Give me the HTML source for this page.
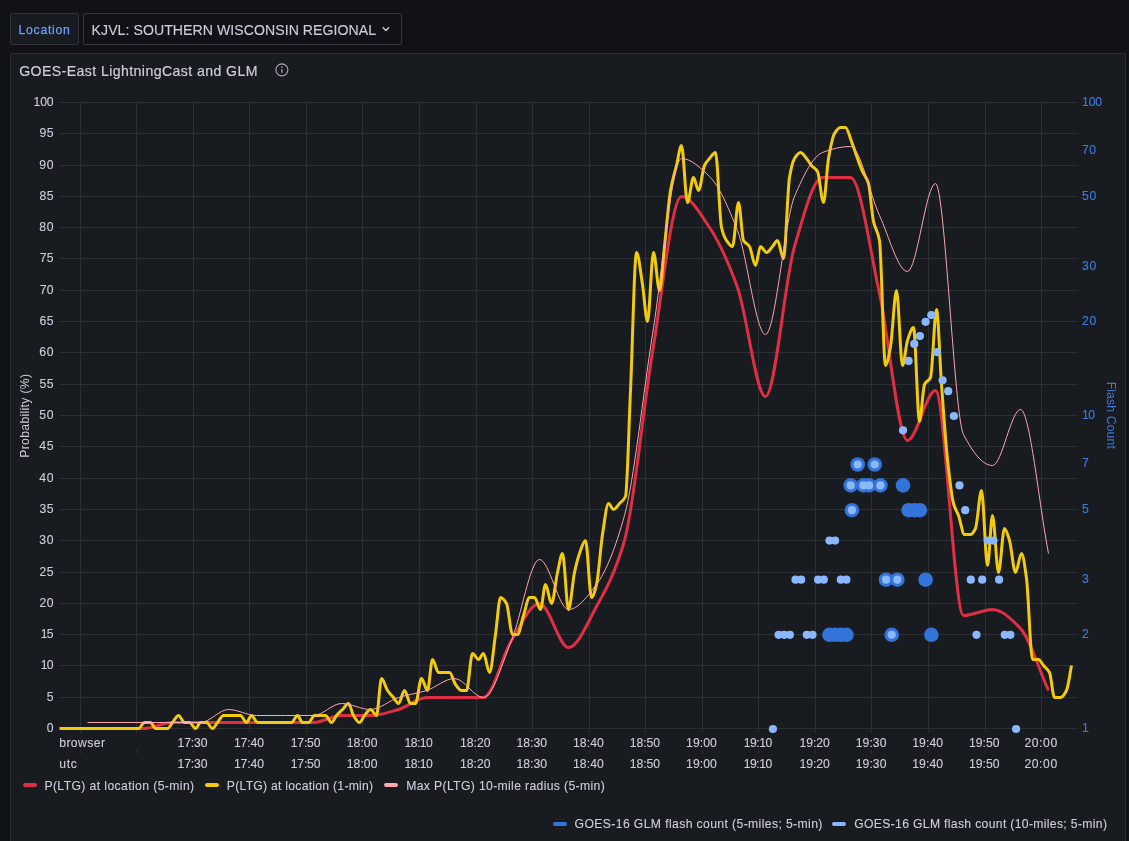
<!DOCTYPE html>
<html><head><meta charset="utf-8"><title>GOES-East LightningCast and GLM</title>
<style>
html,body{margin:0;padding:0;}
html{width:1129px;height:841px;overflow:hidden;background:#111217;}
body{width:1129px;height:841px;overflow:hidden;background:#111217;font-family:"Liberation Sans",sans-serif;color:#ccccdc;position:relative;}
.loc{position:absolute;left:10px;top:13px;width:67px;height:30px;border:1px solid #30333a;background:#181b1f;border-radius:2px;}
.sel{position:absolute;left:83px;top:13px;width:317px;height:30px;border:1px solid #34373d;background:#111217;border-radius:2px;}
.panel{position:absolute;left:10px;top:53px;width:1114px;height:787px;border:1px solid #2a2d32;border-bottom:none;background:#181b1f;border-radius:2px 2px 0 0;}
.t{position:absolute;line-height:20px;height:20px;white-space:nowrap;-webkit-text-stroke:0.12px #ccccdc;}
.yl{position:absolute;left:13px;width:40.5px;text-align:right;font-size:12.2px;line-height:16px;height:16px;-webkit-text-stroke:0.12px #ccccdc;}
.yr{position:absolute;left:1082px;font-size:12.2px;line-height:16px;height:16px;color:#3d79dd;-webkit-text-stroke:0.15px #3d79dd;}
.xl{position:absolute;width:60px;text-align:center;font-size:12.2px;white-space:nowrap;line-height:16px;height:16px;-webkit-text-stroke:0.12px #ccccdc;}
.mk{position:absolute;width:14px;height:4px;border-radius:2px;}
svg{position:absolute;left:0;top:0;}
svg .g rect{fill:#2c2f34;}
#wrap{position:absolute;left:0;top:0;width:1129px;height:841px;will-change:transform;}
</style></head><body>
<div class="loc"></div>
<div class="sel"></div>
<div class="panel"></div>
<div id="wrap">
<svg width="1129" height="841" viewBox="0 0 1129 841">
<path d="M383.1 27.7l2.8 2.8 2.8-2.8" fill="none" stroke="#ccccdc" stroke-width="1.4" stroke-linecap="round" stroke-linejoin="round"/>
<g fill="none" stroke="#a9a9b7" stroke-width="1.15"><circle cx="281.9" cy="69.8" r="6"/><path d="M281.9 69.2v3.5M281.9 66.6v1.4" stroke-width="1.3" stroke-linecap="butt"/></g>
<g class="g">
<rect x="60" y="728" width="1018" height="1"/>
<rect x="60" y="697" width="1018" height="1"/>
<rect x="60" y="665" width="1018" height="1"/>
<rect x="60" y="634" width="1018" height="1"/>
<rect x="60" y="603" width="1018" height="1"/>
<rect x="60" y="572" width="1018" height="1"/>
<rect x="60" y="540" width="1018" height="1"/>
<rect x="60" y="509" width="1018" height="1"/>
<rect x="60" y="478" width="1018" height="1"/>
<rect x="60" y="446" width="1018" height="1"/>
<rect x="60" y="415" width="1018" height="1"/>
<rect x="60" y="384" width="1018" height="1"/>
<rect x="60" y="352" width="1018" height="1"/>
<rect x="60" y="321" width="1018" height="1"/>
<rect x="60" y="290" width="1018" height="1"/>
<rect x="60" y="258" width="1018" height="1"/>
<rect x="60" y="227" width="1018" height="1"/>
<rect x="60" y="196" width="1018" height="1"/>
<rect x="60" y="165" width="1018" height="1"/>
<rect x="60" y="133" width="1018" height="1"/>
<rect x="60" y="102" width="1018" height="1"/>
<rect x="80" y="102" width="1" height="630.5"/>
<rect x="80" y="750" width="1" height="3.5"/>
<rect x="136" y="102" width="1" height="630.5"/>
<rect x="136" y="750" width="1" height="3.5"/>
<rect x="193" y="102" width="1" height="630.5"/>
<rect x="193" y="750" width="1" height="3.5"/>
<rect x="249" y="102" width="1" height="630.5"/>
<rect x="249" y="750" width="1" height="3.5"/>
<rect x="306" y="102" width="1" height="630.5"/>
<rect x="306" y="750" width="1" height="3.5"/>
<rect x="362" y="102" width="1" height="630.5"/>
<rect x="362" y="750" width="1" height="3.5"/>
<rect x="419" y="102" width="1" height="630.5"/>
<rect x="419" y="750" width="1" height="3.5"/>
<rect x="476" y="102" width="1" height="630.5"/>
<rect x="476" y="750" width="1" height="3.5"/>
<rect x="532" y="102" width="1" height="630.5"/>
<rect x="532" y="750" width="1" height="3.5"/>
<rect x="589" y="102" width="1" height="630.5"/>
<rect x="589" y="750" width="1" height="3.5"/>
<rect x="645" y="102" width="1" height="630.5"/>
<rect x="645" y="750" width="1" height="3.5"/>
<rect x="702" y="102" width="1" height="630.5"/>
<rect x="702" y="750" width="1" height="3.5"/>
<rect x="758" y="102" width="1" height="630.5"/>
<rect x="758" y="750" width="1" height="3.5"/>
<rect x="815" y="102" width="1" height="630.5"/>
<rect x="815" y="750" width="1" height="3.5"/>
<rect x="871" y="102" width="1" height="630.5"/>
<rect x="871" y="750" width="1" height="3.5"/>
<rect x="928" y="102" width="1" height="630.5"/>
<rect x="928" y="750" width="1" height="3.5"/>
<rect x="985" y="102" width="1" height="630.5"/>
<rect x="985" y="750" width="1" height="3.5"/>
<rect x="1041" y="102" width="1" height="630.5"/>
<rect x="1041" y="750" width="1" height="3.5"/>
</g>
<g fill="none" stroke-linejoin="round" stroke-linecap="butt">
<path d="M87.50 728.50C96.83 728.50 106.17 728.50 115.50 728.50C124.83 728.50 134.17 728.50 143.50 728.50C153.17 728.50 162.83 722.50 172.50 722.50C181.83 722.50 191.17 722.50 200.50 722.50C209.83 722.50 219.17 722.50 228.50 722.50C237.83 722.50 247.17 722.50 256.50 722.50C266.17 722.50 275.83 722.50 285.50 722.50C294.83 722.50 304.17 722.50 313.50 722.50C322.83 722.50 332.17 715.50 341.50 715.50C351.17 715.50 360.83 715.50 370.50 715.50C379.83 715.50 389.17 712.17 398.50 709.50C407.83 706.83 417.17 697.50 426.50 697.50C435.83 697.50 445.17 697.50 454.50 697.50C464.17 697.50 473.83 697.50 483.50 697.50C492.83 697.50 502.17 655.46 511.50 640.50C520.83 625.54 530.17 603.50 539.50 603.50C549.17 603.50 558.83 647.50 568.50 647.50C577.83 647.50 587.17 623.36 596.50 606.50C605.83 589.64 615.17 573.07 624.50 540.50C633.83 507.93 643.17 408.29 652.50 352.50C662.17 294.72 671.83 196.50 681.50 196.50C690.83 196.50 700.17 213.87 709.50 227.50C718.83 241.13 728.17 261.70 737.50 287.50C746.83 313.30 756.17 396.50 765.50 396.50C775.17 396.50 784.83 278.70 794.50 246.50C803.83 215.41 813.17 177.50 822.50 177.50C831.83 177.50 841.17 177.50 850.50 177.50C860.17 177.50 869.83 249.57 879.50 293.50C888.83 335.91 898.17 440.50 907.50 440.50C916.83 440.50 926.17 390.50 935.50 390.50C944.83 390.50 954.17 615.50 963.50 615.50C973.17 615.50 982.83 609.50 992.50 609.50C1001.83 609.50 1011.17 618.80 1020.50 628.50C1029.83 638.20 1039.17 669.83 1048.50 690.50" stroke="#E02F44" stroke-width="3"/>
<path d="M59.50 728.50C61.50 728.50 63.50 728.50 65.50 728.50C67.17 728.50 68.83 728.50 70.50 728.50C72.50 728.50 74.50 728.50 76.50 728.50C78.50 728.50 80.50 728.50 82.50 728.50C84.17 728.50 85.83 728.50 87.50 728.50C89.50 728.50 91.50 728.50 93.50 728.50C95.50 728.50 97.50 728.50 99.50 728.50C101.17 728.50 102.83 728.50 104.50 728.50C106.50 728.50 108.50 728.50 110.50 728.50C112.50 728.50 114.50 728.50 116.50 728.50C118.17 728.50 119.83 728.50 121.50 728.50C123.50 728.50 125.50 728.50 127.50 728.50C129.50 728.50 131.50 728.50 133.50 728.50C135.17 728.50 136.83 728.50 138.50 728.50C140.50 728.50 142.50 722.50 144.50 722.50C146.50 722.50 148.50 722.50 150.50 722.50C152.17 722.50 153.83 728.50 155.50 728.50C157.50 728.50 159.50 728.50 161.50 728.50C163.50 728.50 165.50 728.50 167.50 728.50C169.17 728.50 170.83 724.47 172.50 722.50C174.50 720.13 176.50 715.50 178.50 715.50C180.50 715.50 182.50 722.50 184.50 722.50C186.17 722.50 187.83 722.50 189.50 722.50C191.50 722.50 193.50 728.50 195.50 728.50C197.17 728.50 198.83 722.50 200.50 722.50C202.50 722.50 204.50 722.50 206.50 722.50C208.50 722.50 210.50 728.50 212.50 728.50C214.17 728.50 215.83 724.47 217.50 722.50C219.50 720.13 221.50 715.50 223.50 715.50C225.50 715.50 227.50 715.50 229.50 715.50C231.17 715.50 232.83 715.50 234.50 715.50C236.50 715.50 238.50 715.50 240.50 715.50C242.50 715.50 244.50 722.50 246.50 722.50C248.17 722.50 249.83 715.50 251.50 715.50C253.50 715.50 255.50 722.50 257.50 722.50C259.50 722.50 261.50 722.50 263.50 722.50C265.17 722.50 266.83 722.50 268.50 722.50C270.50 722.50 272.50 722.50 274.50 722.50C276.50 722.50 278.50 722.50 280.50 722.50C282.17 722.50 283.83 722.50 285.50 722.50C287.50 722.50 289.50 722.50 291.50 722.50C293.50 722.50 295.50 715.50 297.50 715.50C299.17 715.50 300.83 722.50 302.50 722.50C304.50 722.50 306.50 722.50 308.50 722.50C310.50 722.50 312.50 715.50 314.50 715.50C316.17 715.50 317.83 715.50 319.50 715.50C321.50 715.50 323.50 715.50 325.50 715.50C327.50 715.50 329.50 722.50 331.50 722.50C333.17 722.50 334.83 717.45 336.50 715.50C338.50 713.15 340.50 711.50 342.50 709.50C344.50 707.50 346.50 703.50 348.50 703.50C350.17 703.50 351.83 712.86 353.50 715.50C355.50 718.67 357.50 722.50 359.50 722.50C361.17 722.50 362.83 717.45 364.50 715.50C366.50 713.15 368.50 709.50 370.50 709.50C372.50 709.50 374.50 715.50 376.50 715.50C378.17 715.50 379.83 678.50 381.50 678.50C383.50 678.50 385.50 687.55 387.50 690.50C389.50 693.45 391.50 695.13 393.50 697.50C395.17 699.47 396.83 703.50 398.50 703.50C400.50 703.50 402.50 690.50 404.50 690.50C406.50 690.50 408.50 703.50 410.50 703.50C412.17 703.50 413.83 703.50 415.50 703.50C417.50 703.50 419.50 678.50 421.50 678.50C423.50 678.50 425.50 690.50 427.50 690.50C429.17 690.50 430.83 659.50 432.50 659.50C434.50 659.50 436.50 672.50 438.50 672.50C440.50 672.50 442.50 672.50 444.50 672.50C446.17 672.50 447.83 672.50 449.50 672.50C451.50 672.50 453.50 681.83 455.50 684.50C457.50 687.17 459.50 690.50 461.50 690.50C463.17 690.50 464.83 690.50 466.50 690.50C468.50 690.50 470.50 653.50 472.50 653.50C474.50 653.50 476.50 659.50 478.50 659.50C480.17 659.50 481.83 653.50 483.50 653.50C485.50 653.50 487.50 672.50 489.50 672.50C491.50 672.50 493.50 648.18 495.50 634.50C497.17 623.10 498.83 597.50 500.50 597.50C502.50 597.50 504.50 600.15 506.50 603.50C508.50 606.85 510.50 634.50 512.50 634.50C514.17 634.50 515.83 634.50 517.50 634.50C519.50 634.50 521.50 621.66 523.50 615.50C525.50 609.34 527.50 597.50 529.50 597.50C531.17 597.50 532.83 597.50 534.50 597.50C536.50 597.50 538.50 609.50 540.50 609.50C542.17 609.50 543.83 584.50 545.50 584.50C547.50 584.50 549.50 603.50 551.50 603.50C553.50 603.50 555.50 581.22 557.50 572.50C559.17 565.23 560.83 553.50 562.50 553.50C564.50 553.50 566.50 609.50 568.50 609.50C570.50 609.50 572.50 581.84 574.50 572.50C576.17 564.72 577.83 558.14 579.50 553.50C581.50 547.93 583.50 540.50 585.50 540.50C587.50 540.50 589.50 597.50 591.50 597.50C593.17 597.50 594.83 591.00 596.50 584.50C598.50 576.70 600.50 547.26 602.50 534.50C604.50 521.74 606.50 503.50 608.50 503.50C610.17 503.50 611.83 509.50 613.50 509.50C615.50 509.50 617.50 505.65 619.50 503.50C621.50 501.35 623.50 501.05 625.50 496.50C627.17 492.71 628.83 427.23 630.50 390.50C632.50 346.43 634.50 252.50 636.50 252.50C638.50 252.50 640.50 272.04 642.50 284.50C644.17 294.88 645.83 321.50 647.50 321.50C649.50 321.50 651.50 252.50 653.50 252.50C655.50 252.50 657.50 290.50 659.50 290.50C661.17 290.50 662.83 261.58 664.50 246.50C666.50 228.40 668.50 202.02 670.50 190.50C672.50 178.98 674.50 173.66 676.50 165.50C678.17 158.70 679.83 145.50 681.50 145.50C683.50 145.50 685.50 202.50 687.50 202.50C689.50 202.50 691.50 177.50 693.50 177.50C695.17 177.50 696.83 190.50 698.50 190.50C700.50 190.50 702.50 169.63 704.50 165.50C706.17 162.06 707.83 160.45 709.50 158.50C711.50 156.15 713.50 152.50 715.50 152.50C717.50 152.50 719.50 219.06 721.50 227.50C723.17 234.53 724.83 238.06 726.50 240.50C728.50 243.43 730.50 246.50 732.50 246.50C734.50 246.50 736.50 202.50 738.50 202.50C740.17 202.50 741.83 237.48 743.50 240.50C745.50 244.12 747.50 243.46 749.50 246.50C751.50 249.54 753.50 265.50 755.50 265.50C757.17 265.50 758.83 246.50 760.50 246.50C762.50 246.50 764.50 252.50 766.50 252.50C768.50 252.50 770.50 248.69 772.50 246.50C774.17 244.68 775.83 240.50 777.50 240.50C779.50 240.50 781.50 258.50 783.50 258.50C785.50 258.50 787.50 189.16 789.50 177.50C791.17 167.78 792.83 161.19 794.50 158.50C796.50 155.28 798.50 152.50 800.50 152.50C802.50 152.50 804.50 156.15 806.50 158.50C808.17 160.45 809.83 163.55 811.50 165.50C813.50 167.85 815.50 168.15 817.50 171.50C819.50 174.85 821.50 202.50 823.50 202.50C825.17 202.50 826.83 168.03 828.50 158.50C830.50 147.07 832.50 136.73 834.50 133.50C836.50 130.27 838.50 127.50 840.50 127.50C842.17 127.50 843.83 127.50 845.50 127.50C847.50 127.50 849.50 136.38 851.50 141.50C853.50 146.62 855.50 153.08 857.50 158.50C859.17 163.01 860.83 167.72 862.50 171.50C864.50 176.04 866.50 177.05 868.50 183.50C870.17 188.87 871.83 213.95 873.50 221.50C875.50 230.55 877.50 229.50 879.50 240.50C881.50 251.50 883.50 365.50 885.50 365.50C887.17 365.50 888.83 355.39 890.50 346.50C892.50 335.83 894.50 290.50 896.50 290.50C898.50 290.50 900.50 365.50 902.50 365.50C904.17 365.50 905.83 345.60 907.50 340.50C909.50 334.38 911.50 327.50 913.50 327.50C915.50 327.50 917.50 421.50 919.50 421.50C921.17 421.50 922.83 387.94 924.50 384.50C926.50 380.38 928.50 381.73 930.50 377.50C932.50 373.27 934.50 309.50 936.50 309.50C938.17 309.50 939.83 361.71 941.50 384.50C943.50 411.85 945.50 441.01 947.50 459.50C949.50 477.99 951.50 496.38 953.50 503.50C955.17 509.44 956.83 510.97 958.50 515.50C960.50 520.94 962.50 534.50 964.50 534.50C966.50 534.50 968.50 534.50 970.50 534.50C972.17 534.50 973.83 531.79 975.50 528.50C977.50 524.55 979.50 490.50 981.50 490.50C983.50 490.50 985.50 565.50 987.50 565.50C989.17 565.50 990.83 515.50 992.50 515.50C994.50 515.50 996.50 572.50 998.50 572.50C1000.50 572.50 1002.50 528.50 1004.50 528.50C1006.17 528.50 1007.83 535.05 1009.50 540.50C1011.50 547.05 1013.50 572.50 1015.50 572.50C1017.50 572.50 1019.50 553.50 1021.50 553.50C1023.17 553.50 1024.83 566.50 1026.50 578.50C1028.50 592.89 1030.50 659.50 1032.50 659.50C1034.50 659.50 1036.50 659.50 1038.50 659.50C1040.17 659.50 1041.83 663.53 1043.50 665.50C1045.50 667.87 1047.50 668.64 1049.50 672.50C1051.17 675.71 1052.83 697.50 1054.50 697.50C1056.50 697.50 1058.50 697.50 1060.50 697.50C1062.50 697.50 1064.50 694.36 1066.50 690.50C1068.17 687.29 1069.83 673.83 1071.50 665.50" stroke="#F2CC0C" stroke-width="3"/>
<path d="M87.50 722.50C96.83 722.50 106.17 722.50 115.50 722.50C124.83 722.50 134.17 722.50 143.50 722.50C153.17 722.50 162.83 722.50 172.50 722.50C181.83 722.50 191.17 722.50 200.50 722.50C209.83 722.50 219.17 709.50 228.50 709.50C237.83 709.50 247.17 715.50 256.50 715.50C266.17 715.50 275.83 715.50 285.50 715.50C294.83 715.50 304.17 715.50 313.50 715.50C322.83 715.50 332.17 703.50 341.50 703.50C351.17 703.50 360.83 709.50 370.50 709.50C379.83 709.50 389.17 700.45 398.50 697.50C407.83 694.55 417.17 693.45 426.50 690.50C435.83 687.55 445.17 678.50 454.50 678.50C464.17 678.50 473.83 697.50 483.50 697.50C492.83 697.50 502.17 662.80 511.50 640.50C520.83 618.20 530.17 559.50 539.50 559.50C549.17 559.50 558.83 609.50 568.50 609.50C577.83 609.50 587.17 596.73 596.50 584.50C605.83 572.27 615.17 548.80 624.50 515.50C633.83 482.20 643.17 392.94 652.50 334.50C662.17 273.97 671.83 158.50 681.50 158.50C690.83 158.50 700.17 167.50 709.50 176.50C718.83 185.50 728.17 206.80 737.50 230.50C746.83 254.20 756.17 334.50 765.50 334.50C775.17 334.50 784.83 219.27 794.50 196.50C803.83 174.51 813.17 156.02 822.50 152.50C831.83 148.98 841.17 146.50 850.50 146.50C860.17 146.50 869.83 194.50 879.50 215.50C888.83 235.77 898.17 271.50 907.50 271.50C916.83 271.50 926.17 183.50 935.50 183.50C944.83 183.50 954.17 416.59 963.50 434.50C973.17 453.05 982.83 465.50 992.50 465.50C1001.83 465.50 1011.17 409.50 1020.50 409.50C1029.83 409.50 1039.17 505.50 1048.50 553.50" stroke="#FFA6B0" stroke-width="1"/>
</g>
<circle cx="829.5" cy="634.8" r="7.3" fill="#3274D9"/>
<circle cx="835.1" cy="634.8" r="7.3" fill="#3274D9"/>
<circle cx="840.8" cy="634.8" r="7.3" fill="#3274D9"/>
<circle cx="846.4" cy="634.8" r="7.3" fill="#3274D9"/>
<circle cx="857.7" cy="464.5" r="7.3" fill="#3274D9"/>
<circle cx="863.4" cy="485.4" r="7.3" fill="#3274D9"/>
<circle cx="869.0" cy="485.4" r="7.3" fill="#3274D9"/>
<circle cx="874.7" cy="464.5" r="7.3" fill="#3274D9"/>
<circle cx="880.4" cy="485.4" r="7.3" fill="#3274D9"/>
<circle cx="886.0" cy="579.7" r="7.3" fill="#3274D9"/>
<circle cx="891.7" cy="634.8" r="7.3" fill="#3274D9"/>
<circle cx="897.3" cy="579.7" r="7.3" fill="#3274D9"/>
<circle cx="903.0" cy="485.4" r="7.3" fill="#3274D9"/>
<circle cx="908.6" cy="510.2" r="7.3" fill="#3274D9"/>
<circle cx="914.3" cy="510.2" r="7.3" fill="#3274D9"/>
<circle cx="919.9" cy="510.2" r="7.3" fill="#3274D9"/>
<circle cx="925.6" cy="579.7" r="7.3" fill="#3274D9"/>
<circle cx="931.3" cy="634.8" r="7.3" fill="#3274D9"/>
<circle cx="850.7" cy="485.4" r="7.3" fill="#3274D9"/>
<circle cx="851.9" cy="510.2" r="7.3" fill="#3274D9"/>
<circle cx="772.9" cy="729.0" r="4.1" fill="#8AB8FF"/>
<circle cx="778.6" cy="634.8" r="4.1" fill="#8AB8FF"/>
<circle cx="784.2" cy="634.8" r="4.1" fill="#8AB8FF"/>
<circle cx="789.9" cy="634.8" r="4.1" fill="#8AB8FF"/>
<circle cx="795.5" cy="579.7" r="4.1" fill="#8AB8FF"/>
<circle cx="801.2" cy="579.7" r="4.1" fill="#8AB8FF"/>
<circle cx="806.8" cy="634.8" r="4.1" fill="#8AB8FF"/>
<circle cx="812.5" cy="634.8" r="4.1" fill="#8AB8FF"/>
<circle cx="818.1" cy="579.7" r="4.1" fill="#8AB8FF"/>
<circle cx="823.8" cy="579.7" r="4.1" fill="#8AB8FF"/>
<circle cx="829.5" cy="540.6" r="4.1" fill="#8AB8FF"/>
<circle cx="835.1" cy="540.6" r="4.1" fill="#8AB8FF"/>
<circle cx="840.8" cy="579.7" r="4.1" fill="#8AB8FF"/>
<circle cx="846.4" cy="579.7" r="4.1" fill="#8AB8FF"/>
<circle cx="857.7" cy="464.5" r="4.1" fill="#8AB8FF"/>
<circle cx="863.4" cy="485.4" r="4.1" fill="#8AB8FF"/>
<circle cx="869.0" cy="485.4" r="4.1" fill="#8AB8FF"/>
<circle cx="874.7" cy="464.5" r="4.1" fill="#8AB8FF"/>
<circle cx="880.4" cy="485.4" r="4.1" fill="#8AB8FF"/>
<circle cx="886.0" cy="579.7" r="4.1" fill="#8AB8FF"/>
<circle cx="891.7" cy="634.8" r="4.1" fill="#8AB8FF"/>
<circle cx="897.3" cy="579.7" r="4.1" fill="#8AB8FF"/>
<circle cx="903.0" cy="430.3" r="4.1" fill="#8AB8FF"/>
<circle cx="908.6" cy="360.9" r="4.1" fill="#8AB8FF"/>
<circle cx="914.3" cy="343.9" r="4.1" fill="#8AB8FF"/>
<circle cx="919.9" cy="336.1" r="4.1" fill="#8AB8FF"/>
<circle cx="925.6" cy="321.8" r="4.1" fill="#8AB8FF"/>
<circle cx="931.3" cy="315.1" r="4.1" fill="#8AB8FF"/>
<circle cx="936.9" cy="352.1" r="4.1" fill="#8AB8FF"/>
<circle cx="942.6" cy="380.3" r="4.1" fill="#8AB8FF"/>
<circle cx="948.2" cy="391.2" r="4.1" fill="#8AB8FF"/>
<circle cx="953.9" cy="416.0" r="4.1" fill="#8AB8FF"/>
<circle cx="959.5" cy="485.4" r="4.1" fill="#8AB8FF"/>
<circle cx="965.2" cy="510.2" r="4.1" fill="#8AB8FF"/>
<circle cx="970.8" cy="579.7" r="4.1" fill="#8AB8FF"/>
<circle cx="976.5" cy="634.8" r="4.1" fill="#8AB8FF"/>
<circle cx="982.2" cy="579.7" r="4.1" fill="#8AB8FF"/>
<circle cx="987.8" cy="540.6" r="4.1" fill="#8AB8FF"/>
<circle cx="993.5" cy="540.6" r="4.1" fill="#8AB8FF"/>
<circle cx="999.1" cy="579.7" r="4.1" fill="#8AB8FF"/>
<circle cx="1004.8" cy="634.8" r="4.1" fill="#8AB8FF"/>
<circle cx="1010.4" cy="634.8" r="4.1" fill="#8AB8FF"/>
<circle cx="1016.1" cy="729.0" r="4.1" fill="#8AB8FF"/>
<circle cx="850.7" cy="485.4" r="4.1" fill="#8AB8FF"/>
<circle cx="851.9" cy="510.2" r="4.1" fill="#8AB8FF"/>
<text id="prob" transform="translate(28.80 415.70) rotate(-90)" text-anchor="middle" font-family="Liberation Sans, sans-serif" font-size="12.2" letter-spacing="0.320" fill="#ccccdc">Probability (%)</text>
<text id="flash" transform="translate(1107.00 415.30) rotate(90)" text-anchor="middle" font-family="Liberation Sans, sans-serif" font-size="12.2" letter-spacing="0.140" fill="#3d79dd">Flash Count</text>
</svg>
<div class="yl" style="top:720.0px;letter-spacing:0.82px;width:41.42px">0</div>
<div class="yl" style="top:689.0px;letter-spacing:0.52px;width:41.12px">5</div>
<div class="yl" style="top:657.0px;letter-spacing:-0.63px;width:39.97px">10</div>
<div class="yl" style="top:626.0px;letter-spacing:-0.78px;width:39.82px">15</div>
<div class="yl" style="top:595.0px;letter-spacing:0.62px;width:41.22px">20</div>
<div class="yl" style="top:564.0px;letter-spacing:0.47px;width:41.07px">25</div>
<div class="yl" style="top:532.0px;letter-spacing:0.77px;width:41.37px">30</div>
<div class="yl" style="top:501.0px;letter-spacing:0.62px;width:41.22px">35</div>
<div class="yl" style="top:470.0px;letter-spacing:0.87px;width:41.47px">40</div>
<div class="yl" style="top:438.0px;letter-spacing:0.72px;width:41.32px">45</div>
<div class="yl" style="top:407.0px;letter-spacing:0.67px;width:41.27px">50</div>
<div class="yl" style="top:376.0px;letter-spacing:0.52px;width:41.12px">55</div>
<div class="yl" style="top:344.0px;letter-spacing:0.77px;width:41.37px">60</div>
<div class="yl" style="top:313.0px;letter-spacing:0.62px;width:41.22px">65</div>
<div class="yl" style="top:282.0px;letter-spacing:0.37px;width:40.97px">70</div>
<div class="yl" style="top:250.0px;letter-spacing:0.22px;width:40.82px">75</div>
<div class="yl" style="top:219.0px;letter-spacing:0.77px;width:41.37px">80</div>
<div class="yl" style="top:188.0px;letter-spacing:0.62px;width:41.22px">85</div>
<div class="yl" style="top:157.0px;letter-spacing:0.77px;width:41.37px">90</div>
<div class="yl" style="top:125.0px;letter-spacing:0.62px;width:41.22px">95</div>
<div class="yl" style="top:94.0px;letter-spacing:-0.15px;width:40.45px">100</div>
<div class="yr" style="top:720.0px;letter-spacing:-2.08px">1</div>
<div class="yr" style="top:626.0px;letter-spacing:0.42px">2</div>
<div class="yr" style="top:571.0px;letter-spacing:0.72px">3</div>
<div class="yr" style="top:501.0px;letter-spacing:0.52px">5</div>
<div class="yr" style="top:455.0px;letter-spacing:-0.08px">7</div>
<div class="yr" style="top:407.0px;letter-spacing:-0.63px">10</div>
<div class="yr" style="top:313.0px;letter-spacing:0.62px">20</div>
<div class="yr" style="top:258.0px;letter-spacing:0.77px">30</div>
<div class="yr" style="top:188.0px;letter-spacing:0.67px">50</div>
<div class="yr" style="top:142.0px;letter-spacing:0.37px">70</div>
<div class="yr" style="top:94.0px;letter-spacing:-0.15px">100</div>
<div class="xl" style="left:162.5px;top:734.6px;letter-spacing:-0.12px;text-indent:-0.12px">17:30</div>
<div class="xl" style="left:162.5px;top:755.7px;letter-spacing:-0.12px;text-indent:-0.12px">17:30</div>
<div class="xl" style="left:219.0px;top:734.6px;letter-spacing:-0.08px;text-indent:-0.08px">17:40</div>
<div class="xl" style="left:219.0px;top:755.7px;letter-spacing:-0.08px;text-indent:-0.08px">17:40</div>
<div class="xl" style="left:275.6px;top:734.6px;letter-spacing:-0.16px;text-indent:-0.16px">17:50</div>
<div class="xl" style="left:275.6px;top:755.7px;letter-spacing:-0.16px;text-indent:-0.16px">17:50</div>
<div class="xl" style="left:332.1px;top:734.6px;letter-spacing:0.06px;text-indent:0.06px">18:00</div>
<div class="xl" style="left:332.1px;top:755.7px;letter-spacing:0.06px;text-indent:0.06px">18:00</div>
<div class="xl" style="left:388.7px;top:734.6px;letter-spacing:-0.52px;text-indent:-0.52px">18:10</div>
<div class="xl" style="left:388.7px;top:755.7px;letter-spacing:-0.52px;text-indent:-0.52px">18:10</div>
<div class="xl" style="left:445.3px;top:734.6px;letter-spacing:-0.02px;text-indent:-0.02px">18:20</div>
<div class="xl" style="left:445.3px;top:755.7px;letter-spacing:-0.02px;text-indent:-0.02px">18:20</div>
<div class="xl" style="left:501.8px;top:734.6px;letter-spacing:0.04px;text-indent:0.04px">18:30</div>
<div class="xl" style="left:501.8px;top:755.7px;letter-spacing:0.04px;text-indent:0.04px">18:30</div>
<div class="xl" style="left:558.4px;top:734.6px;letter-spacing:0.08px;text-indent:0.08px">18:40</div>
<div class="xl" style="left:558.4px;top:755.7px;letter-spacing:0.08px;text-indent:0.08px">18:40</div>
<div class="xl" style="left:614.9px;top:734.6px;letter-spacing:-0.00px;text-indent:-0.00px">18:50</div>
<div class="xl" style="left:614.9px;top:755.7px;letter-spacing:-0.00px;text-indent:-0.00px">18:50</div>
<div class="xl" style="left:671.5px;top:734.6px;letter-spacing:0.06px;text-indent:0.06px">19:00</div>
<div class="xl" style="left:671.5px;top:755.7px;letter-spacing:0.06px;text-indent:0.06px">19:00</div>
<div class="xl" style="left:728.0px;top:734.6px;letter-spacing:-0.52px;text-indent:-0.52px">19:10</div>
<div class="xl" style="left:728.0px;top:755.7px;letter-spacing:-0.52px;text-indent:-0.52px">19:10</div>
<div class="xl" style="left:784.6px;top:734.6px;letter-spacing:-0.02px;text-indent:-0.02px">19:20</div>
<div class="xl" style="left:784.6px;top:755.7px;letter-spacing:-0.02px;text-indent:-0.02px">19:20</div>
<div class="xl" style="left:841.1px;top:734.6px;letter-spacing:0.04px;text-indent:0.04px">19:30</div>
<div class="xl" style="left:841.1px;top:755.7px;letter-spacing:0.04px;text-indent:0.04px">19:30</div>
<div class="xl" style="left:897.7px;top:734.6px;letter-spacing:0.08px;text-indent:0.08px">19:40</div>
<div class="xl" style="left:897.7px;top:755.7px;letter-spacing:0.08px;text-indent:0.08px">19:40</div>
<div class="xl" style="left:954.3px;top:734.6px;letter-spacing:-0.00px;text-indent:-0.00px">19:50</div>
<div class="xl" style="left:954.3px;top:755.7px;letter-spacing:-0.00px;text-indent:-0.00px">19:50</div>
<div class="xl" style="left:1010.8px;top:734.6px;letter-spacing:0.58px;text-indent:0.58px">20:00</div>
<div class="xl" style="left:1010.8px;top:755.7px;letter-spacing:0.58px;text-indent:0.58px">20:00</div>
<div id="loc" class="t" style="left:18.60px;top:20.27px;font-size:12.2px;color:#6e9fff;letter-spacing:0.714px;-webkit-text-stroke:0.25px #6e9fff;">Location</div>
<div id="sel" class="t" style="left:91.60px;top:19.99px;font-size:14.1px;color:#ccccdc;letter-spacing:0.056px;">KJVL: SOUTHERN WISCONSIN REGIONAL</div>
<div id="title" class="t" style="left:19.20px;top:60.79px;font-size:14.1px;color:#ccccdc;letter-spacing:0.420px;-webkit-text-stroke:0.2px #ccccdc;">GOES-East LightningCast and GLM</div>
<div id="lg1" class="t" style="left:44.40px;top:775.57px;font-size:12.2px;color:#ccccdc;letter-spacing:0.392px;">P(LTG) at location (5-min)</div>
<div id="lg2" class="t" style="left:226.80px;top:775.57px;font-size:12.2px;color:#ccccdc;letter-spacing:0.256px;">P(LTG) at location (1-min)</div>
<div id="lg3" class="t" style="left:406.20px;top:775.57px;font-size:12.2px;color:#ccccdc;letter-spacing:0.350px;">Max P(LTG) 10-mile radius (5-min)</div>
<div id="lg4" class="t" style="left:574.60px;top:814.37px;font-size:12.2px;color:#ccccdc;letter-spacing:0.379px;">GOES-16 GLM flash count (5-miles; 5-min)</div>
<div id="lg5" class="t" style="left:854.20px;top:814.37px;font-size:12.2px;color:#ccccdc;letter-spacing:0.325px;">GOES-16 GLM flash count (10-miles; 5-min)</div>
<div id="brw" class="t" style="left:59.20px;top:732.57px;font-size:12.2px;color:#ccccdc;letter-spacing:0.417px;">browser</div>
<div id="utc" class="t" style="left:59.20px;top:753.67px;font-size:12.2px;color:#ccccdc;letter-spacing:0.700px;">utc</div>
<div class="mk" style="left:23px;top:783px;background:#E02F44"></div>
<div class="mk" style="left:205px;top:783px;background:#F2CC0C"></div>
<div class="mk" style="left:384px;top:783px;background:#FFA6B0"></div>
<div class="mk" style="left:553px;top:822px;background:#3274D9"></div>
<div class="mk" style="left:832px;top:822px;background:#8AB8FF"></div>
</div>
</body></html>
